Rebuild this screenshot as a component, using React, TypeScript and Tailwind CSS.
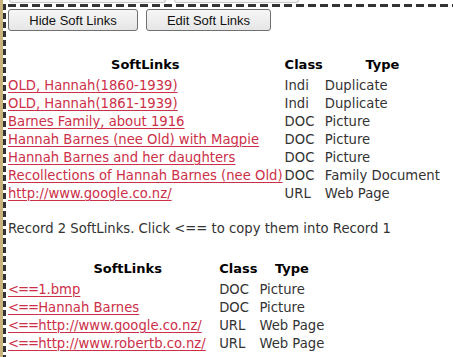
import React from "react";

const rows1 = [
  ["OLD, Hannah(1860-1939)", "Indi", "Duplicate"],
  ["OLD, Hannah(1861-1939)", "Indi", "Duplicate"],
  ["Barnes Family, about 1916", "DOC", "Picture"],
  ["Hannah Barnes (nee Old) with Magpie", "DOC", "Picture"],
  ["Hannah Barnes and her daughters", "DOC", "Picture"],
  ["Recollections of Hannah Barnes (nee Old)", "DOC", "Family Document"],
  ["http://www.google.co.nz/", "URL", "Web Page"],
];

const rows2 = [
  ["1.bmp", "DOC", "Picture"],
  ["Hannah Barnes", "DOC", "Picture"],
  ["http://www.google.co.nz/", "URL", "Web Page"],
  ["http://www.robertb.co.nz/", "URL", "Web Page"],
];

const link = "text-[#cc2f48] underline underline-offset-2 decoration-1";
const th = "text-[13px] font-bold text-black text-center leading-[20px] pb-[2px]";

export default function App() {
  return (
    <div
      className="flex w-[453px] h-[357px] overflow-hidden bg-white text-[#333]"
      style={{ fontFamily: '"DejaVu Sans", Verdana, sans-serif' }}
    >
      <div className="w-[3px] shrink-0 bg-[#c8b27e]" />
      <div className="flex-1 flex flex-col">
        <div className="h-[4px] flex gap-2 pl-[6px]">
          <div className="w-[157px] h-[3px] border-b border-x border-[#c9c9c9] rounded-b-[3px] bg-[#f4f4f4]" />
          <div className="w-[125px] h-[3px] border-b border-x border-[#c9c9c9] rounded-b-[3px] bg-[#f4f4f4]" />
        </div>
        <div className="flex flex-1">
          <div className="w-[3px] shrink-0 bg-[repeating-linear-gradient(to_bottom,#333_0px,#333_6px,#fff_6px,#fff_9px)]" />
          <div className="flex-1 flex flex-col">
            <div className="h-[3px] bg-[repeating-linear-gradient(to_right,#fff_0px,#fff_2px,#333_2px,#333_10px,#fff_10px,#fff_12px)]" />
            <div className="flex flex-col items-start pl-[2px] pt-[2px]">
              <div className="flex gap-[8px]" style={{ fontFamily: '"Liberation Sans", Arial, sans-serif' }}>
                <button className="w-[130px] h-[22px] border border-[#707070] rounded-[3px] bg-[linear-gradient(#f6f6f6,#e6e6e6)] text-[13px] text-[#111] leading-none">
                  Hide Soft Links
                </button>
                <button className="w-[125px] h-[22px] border border-[#707070] rounded-[3px] bg-[linear-gradient(#f6f6f6,#e6e6e6)] text-[13px] text-[#111] leading-none">
                  Edit Soft Links
                </button>
              </div>

              <table className="mt-[24px] text-[13.2px] leading-[18px]">
                <thead>
                  <tr>
                    <th className={`${th} pr-[2px]`}>SoftLinks</th>
                    <th className={`${th} pr-[2px]`}>Class</th>
                    <th className={th}>Type</th>
                  </tr>
                </thead>
                <tbody>
                  {rows1.map((r, i) => (
                    <tr key={i}>
                      <td className="pr-[2px] text-left whitespace-nowrap">
                        <a className={link}>{r[0]}</a>
                      </td>
                      <td className="pr-[3px] text-left">{r[1]}</td>
                      <td className="text-left whitespace-nowrap">{r[2]}</td>
                    </tr>
                  ))}
                </tbody>
              </table>

              <p className="mt-[17px] text-[13.2px] leading-[18px] whitespace-nowrap">
                Record 2 SoftLinks. Click &lt;== to copy them into Record 1
              </p>

              <table className="mt-[21px] text-[13.2px] leading-[18px]">
                <thead>
                  <tr>
                    <th className={th}></th>
                    <th className={`${th} pr-[2px]`}>SoftLinks</th>
                    <th className={`${th} pr-[2px]`}>Class</th>
                    <th className={th}>Type</th>
                  </tr>
                </thead>
                <tbody>
                  {rows2.map((r, i) => (
                    <tr key={i}>
                      <td className="text-left whitespace-nowrap">
                        <a className={`${link} tracking-[-1px]`}>&lt;==</a>
                      </td>
                      <td className="w-[181px] pr-[2px] text-left whitespace-nowrap">
                        <a className={link}>{r[0]}</a>
                      </td>
                      <td className="pr-[3px] text-left">{r[1]}</td>
                      <td className="text-left whitespace-nowrap">{r[2]}</td>
                    </tr>
                  ))}
                </tbody>
              </table>
            </div>
          </div>
        </div>
      </div>
    </div>
  );
}
